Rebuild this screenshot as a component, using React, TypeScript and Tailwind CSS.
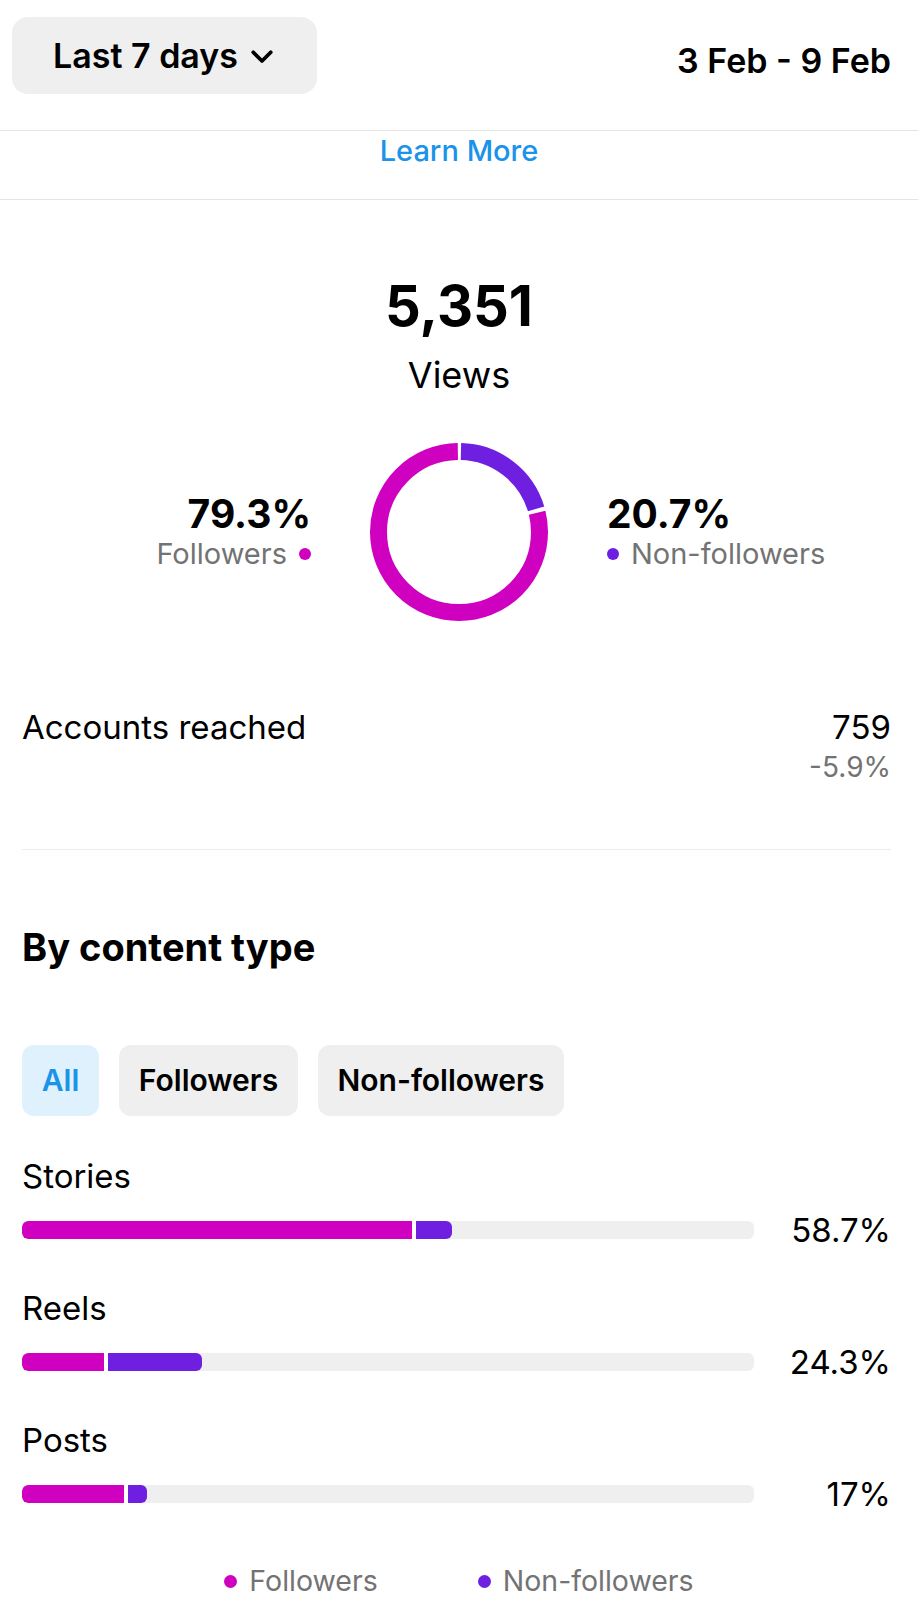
import React from "react";

const MAG = "#d000c0";
const PUR = "#6e1fe0";

function Donut() {
  const r = 80.5;
  const C = 2 * Math.PI * r;
  const gap = 4;
  const p = 0.207;
  const purLen = p * C - gap;
  const magLen = (1 - p) * C - gap;
  return (
    <svg width="178" height="178" viewBox="0 0 178 178">
      <g transform="rotate(-90 89 89)">
        <circle
          cx="89"
          cy="89"
          r={r}
          fill="none"
          stroke={PUR}
          strokeWidth="17"
          strokeDasharray={`${purLen} ${C - purLen}`}
          strokeDashoffset={-gap / 2}
        />
        <circle
          cx="89"
          cy="89"
          r={r}
          fill="none"
          stroke={MAG}
          strokeWidth="17"
          strokeDasharray={`${magLen} ${C - magLen}`}
          strokeDashoffset={-(p * C + gap / 2)}
        />
      </g>
    </svg>
  );
}

function Bar({ label, mag, pur, pct, first }: { label: string; mag: number; pur: number; pct: string; first?: boolean }) {
  return (
    <div className={first ? "mt-[42px]" : "mt-[51px]"}>
      <div className="pl-[22px] text-[33px] leading-[36px] text-black">{label}</div>
      <div className="mt-[27px] flex h-[18px] items-center pl-[22px] pr-[27px]">
        <div className="flex h-[18px] w-[732px] overflow-hidden rounded-[6px] bg-[#efefef]">
          <div className="h-full rounded-l-[6px]" style={{ width: mag, background: MAG }} />
          <div className="h-full w-[4px] bg-white" />
          <div className="h-full rounded-r-[6px]" style={{ width: pur, background: PUR }} />
        </div>
        <div className="flex-1 text-right text-[33px] leading-[36px] text-black">{pct}</div>
      </div>
    </div>
  );
}

export default function App() {
  return (
    <div
      className="min-h-[1600px] w-[918px] overflow-hidden bg-white text-black"
      style={{ fontFamily: "Inter, 'Noto Sans', sans-serif" }}
    >
      {/* Header */}
      <div className="flex items-center justify-between pl-[12px] pr-[27px] pt-[17px]">
        <div className="flex h-[77px] w-[305px] items-center rounded-[16px] bg-[#efefef] pl-[41px]">
          <span className="text-[34px] font-semibold leading-[36px]">Last 7 days</span>
          <svg width="30" height="30" viewBox="0 0 24 24" className="ml-[9px]" fill="none" stroke="black" strokeWidth="3" strokeLinecap="round" strokeLinejoin="round">
            <path d="M5 9l7 7 7-7" />
          </svg>
        </div>
        <div className="mt-[11px] text-[34px] font-semibold leading-[36px]">3 Feb - 9 Feb</div>
      </div>

      <div className="mt-[36px] border-t border-[#e4e4e4]" />
      <div className="h-[68px] pt-[4px] text-center text-[29px] font-medium leading-[32px] text-[#1a93e8]">Learn More</div>
      <div className="border-t border-[#e4e4e4]" />

      {/* Views */}
      <div className="mt-[76px] text-center text-[56px] font-bold leading-[60px]">5,351</div>
      <div className="mt-[19px] text-center text-[36px] leading-[40px]">Views</div>

      <div className="mt-[48px] grid grid-cols-[1fr_auto_1fr] items-center gap-x-[59px]">
        <div className="flex flex-col items-end">
          <div className="text-[39px] font-bold leading-[40px]">79.3%</div>
          <div className="mt-[4px] flex items-center text-[29px] leading-[32px] text-[#737373]">
            Followers
            <span className="ml-[12px] inline-block h-[12px] w-[12px] rounded-full" style={{ background: MAG }} />
          </div>
        </div>
        <Donut />
        <div className="flex flex-col items-start">
          <div className="text-[39px] font-bold leading-[40px]">20.7%</div>
          <div className="mt-[4px] flex items-center text-[29px] leading-[32px] text-[#737373]">
            <span className="mr-[12px] inline-block h-[12px] w-[12px] rounded-full" style={{ background: PUR }} />
            Non-followers
          </div>
        </div>
      </div>

      {/* Accounts reached */}
      <div className="mt-[88px] flex justify-between pl-[22px] pr-[27px]">
        <div className="text-[33px] leading-[36px]">Accounts reached</div>
        <div className="flex flex-col items-end">
          <div className="text-[33px] leading-[36px]">759</div>
          <div className="mt-[7px] text-[28px] leading-[30px] text-[#737373]">-5.9%</div>
        </div>
      </div>

      <div className="ml-[22px] mr-[27px] mt-[67px] border-t border-[#ececec]" />

      <div className="mt-[77px] pl-[22px] text-[38px] font-bold leading-[40px]">By content type</div>

      <div className="mt-[78px] flex gap-[20px] pl-[22px]">
        <div className="flex h-[71px] w-[77px] items-center justify-center rounded-[12px] bg-[#e0f1fe] text-[30px] font-semibold text-[#1a93e8]">All</div>
        <div className="flex h-[71px] w-[179px] items-center justify-center rounded-[12px] bg-[#efefef] text-[30px] font-semibold">Followers</div>
        <div className="flex h-[71px] w-[246px] items-center justify-center rounded-[12px] bg-[#efefef] text-[30px] font-semibold">Non-followers</div>
      </div>

      <Bar first label="Stories" mag={390} pur={36} pct="58.7%" />
      <Bar label="Reels" mag={82} pur={94} pct="24.3%" />
      <Bar label="Posts" mag={102} pur={19} pct="17%" />

      <div className="mt-[62px] flex items-center justify-center text-[28.5px] leading-[32px] text-[#737373]">
        <div className="flex items-center">
          <span className="mr-[12px] inline-block h-[13px] w-[13px] rounded-full" style={{ background: MAG }} />
          Followers
        </div>
        <div className="ml-[100px] flex items-center">
          <span className="mr-[12px] inline-block h-[13px] w-[13px] rounded-full" style={{ background: PUR }} />
          Non-followers
        </div>
      </div>
    </div>
  );
}
